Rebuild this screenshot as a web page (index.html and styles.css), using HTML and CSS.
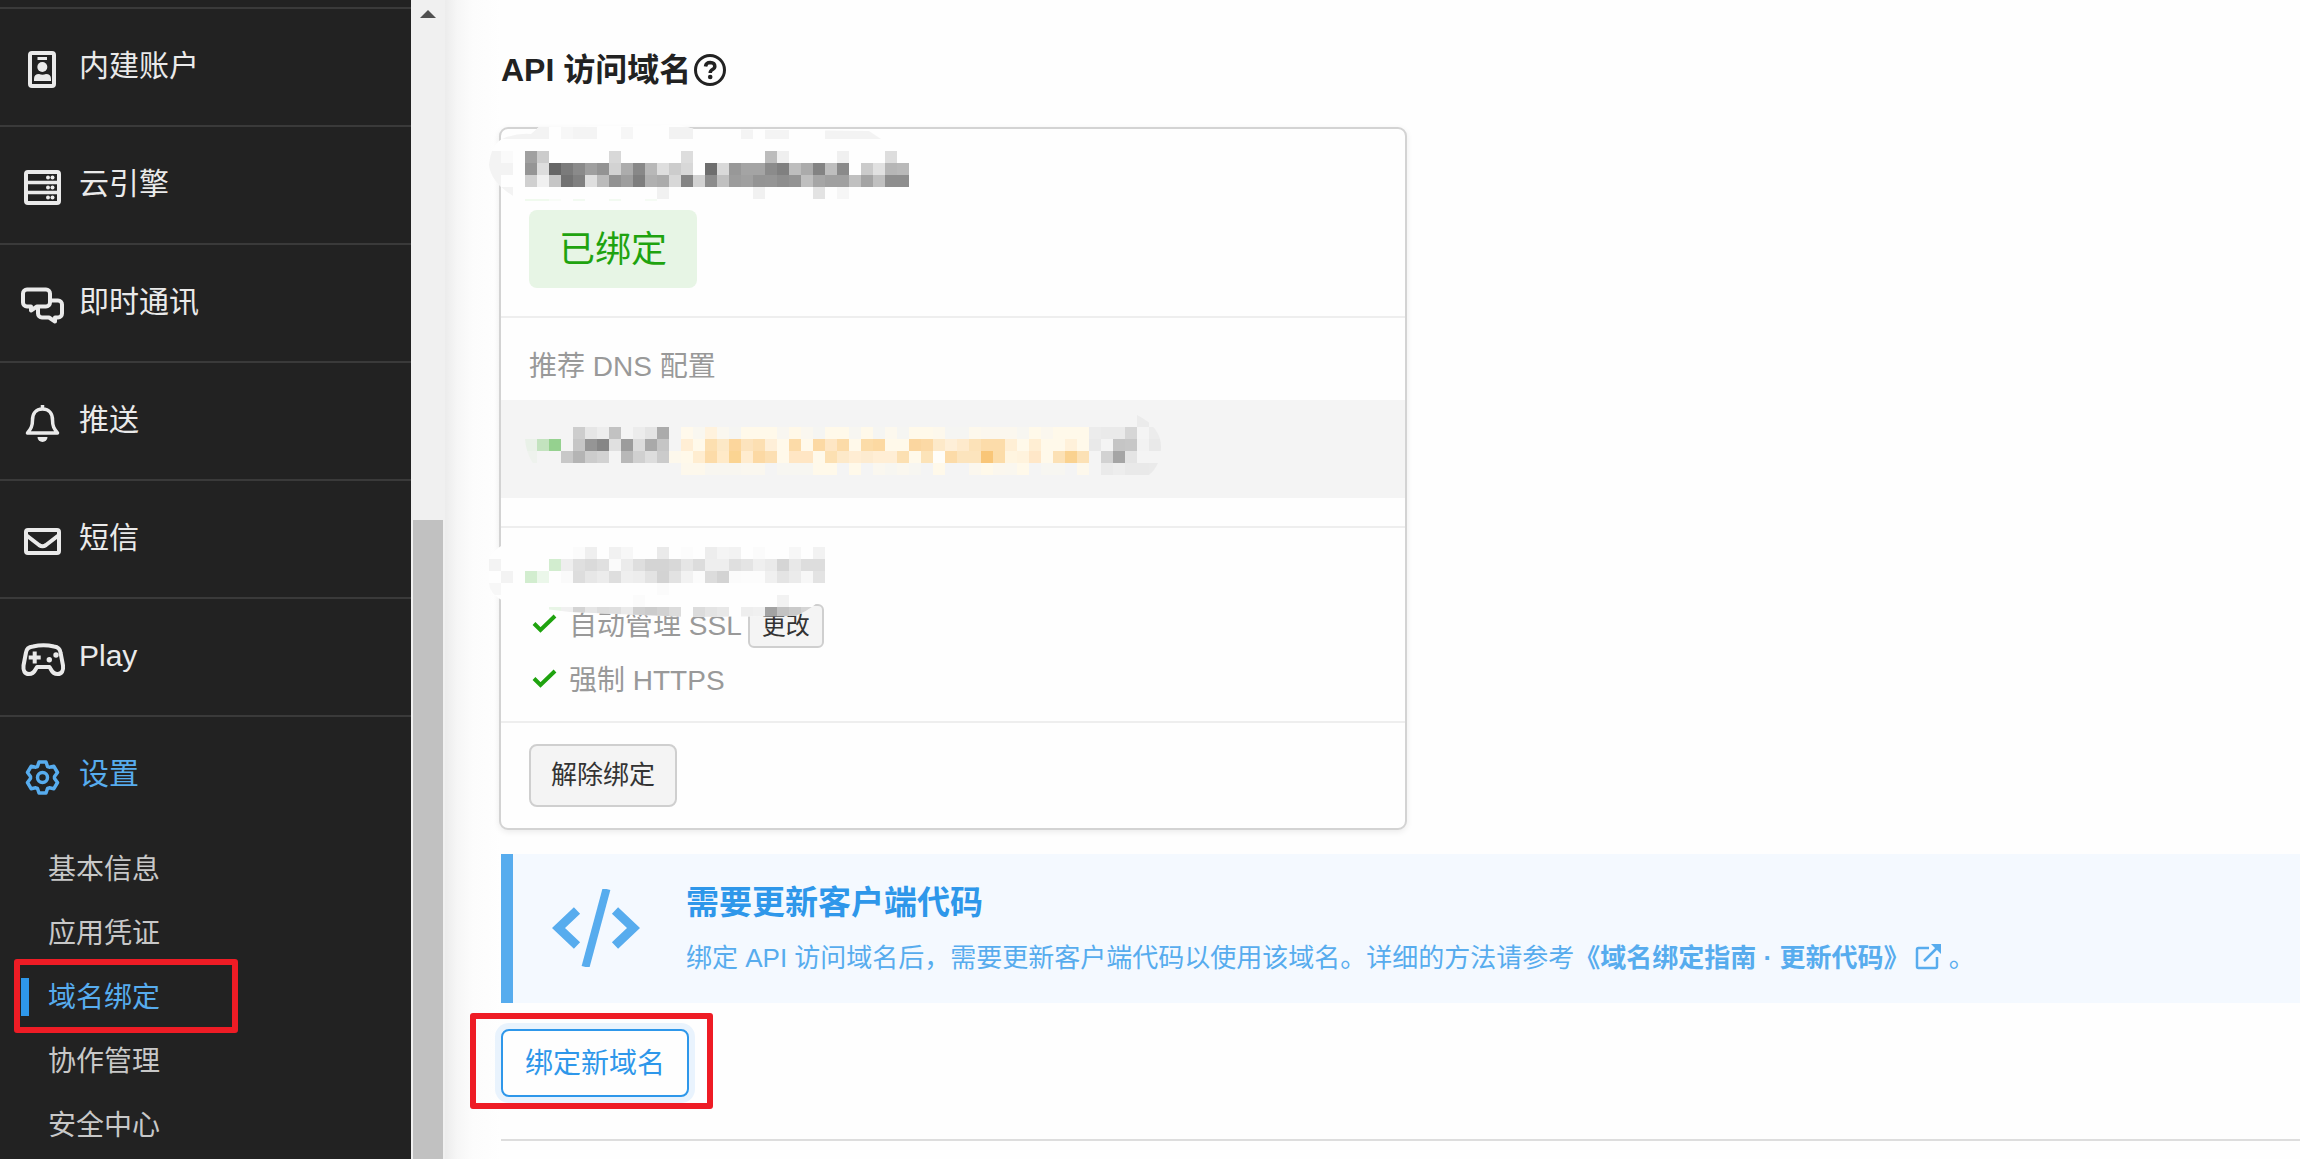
FILE: index.html
```html
<!DOCTYPE html>
<html lang="zh-CN">
  <head>
    <meta charset="UTF-8" />
    <meta name="viewport" content="width=device-width, initial-scale=1.0" />
    <title>域名绑定</title>
    <link rel="stylesheet" href="styles.css" />
  </head>

  <body>
    <div class="app">
      <nav class="sidebar">
        <a class="nav-item" href="#">
          <svg class="nav-icon" viewBox="0 0 48 40">
            <rect x="11" y="4" width="24" height="33" rx="2" />
            <path class="solid" d="M18.500 8h9.500v3h-9.500zM15 32v-2q0-5 5-5 3.500 1.500 7 0 5 0 5 5v2z" />
            <circle class="solid" cx="23.300" cy="18" r="5" />
          </svg>
          <span>内建账户</span>
        </a>
        <a class="nav-item" href="#">
          <svg class="nav-icon" viewBox="0 0 48 40">
            <rect x="7" y="5" width="33" height="31" rx="2" />
            <path d="M7 15.500h33M7 25.500h33" stroke-width="3.500" />
            <g class="solid">
              <circle cx="29" cy="10.500" r="2" /><circle cx="33.500" cy="10.500" r="2" />
              <circle cx="29" cy="20.500" r="2" /><circle cx="33.500" cy="20.500" r="2" />
              <circle cx="29" cy="30.500" r="2" /><circle cx="33.500" cy="30.500" r="2" />
            </g>
          </svg>
          <span>云引擎</span>
        </a>
        <a class="nav-item" href="#">
          <svg class="nav-icon" viewBox="0 0 48 40">
            <path d="M8 4.500h19a4 4 0 0 1 4 4v9a4 4 0 0 1-4 4h-9l-6 4v-4H8a4 4 0 0 1-4-4v-9a4 4 0 0 1 4-4z" />
            <path d="M32 15.500h7a4 4 0 0 1 4 4v9a4 4 0 0 1-4 4h-3v4l-6-4h-7a4 4 0 0 1-4-4v-7" />
          </svg>
          <span>即时通讯</span>
        </a>
        <a class="nav-item" href="#">
          <svg class="nav-icon" viewBox="0 0 48 40">
            <path d="M23.500 2v4M23.500 6c-7 0-10 5-10 11 0 7-2 9-5 13h30c-3-4-5-6-5-13 0-6-3-11-10-11z" stroke-width="3.500" />
            <path class="solid" d="M18.500 34h10a5 5 0 0 1-10 0z" />
          </svg>
          <span>推送</span>
        </a>
        <a class="nav-item" href="#">
          <svg class="nav-icon" viewBox="0 0 48 40">
            <rect x="7" y="9" width="33" height="23" rx="2" />
            <path d="M7 14l13 10q3.500 2.500 7 0l13-10" />
          </svg>
          <span>短信</span>
        </a>
        <a class="nav-item" href="#">
          <svg class="nav-icon" viewBox="0 0 48 40">
            <path d="M14 7.500q10.500-2.500 21 0c4 .5 6 2 6.500 6l2.500 13c.6 5-1 8.500-5.500 8.500-3 0-5-1.500-6.500-4.500L30.500 28H18l-1.500 2.500C15 33.500 13 35 10 35c-4.500 0-6-3.500-5.500-8.500l2.500-13c.5-4 2.500-5.500 7-6z" />
            <path d="M15.700 12.500v12M9.700 18.500h12" />
            <circle class="solid" cx="30.300" cy="20.700" r="2.700" />
            <circle class="solid" cx="37" cy="16" r="2.700" />
          </svg>
          <span>Play</span>
        </a>
        <a class="nav-item active" href="#">
          <svg class="nav-icon" viewBox="-23.500 -20.500 48 40">
            <path d="M-3.500-15.500H3.500L5-11 6.800-10.300 11.400-11.200 15-5 12-1V1L15 5 11.400 11.200 6.800 10.300 5 11 3.500 15.500H-3.500L-5 11-6.800 10.300-11.400 11.200-15 5-12 1V-1L-15-5-11.400-11.200-6.800-10.300-5-11z" stroke-width="3.500" />
            <circle r="5" stroke-width="3.500" />
          </svg>
          <span>设置</span>
        </a>
        <ul class="sub-nav">
          <li><a href="#">基本信息</a></li>
          <li><a href="#">应用凭证</a></li>
          <li class="current"><a href="#">域名绑定</a></li>
          <li><a href="#">协作管理</a></li>
          <li><a href="#">安全中心</a></li>
        </ul>
      </nav>

      <div class="scrollbar" aria-hidden="true">
        <div class="track">
          <svg width="16" height="8" viewBox="0 0 16 8"><path d="M0 8L8 0l8 8z" /></svg>
        </div>
        <div class="thumb"></div>
      </div>

      <main class="content">
        <h2 class="title">
          API 访问域名<svg class="help" viewBox="0 0 32 32">
            <circle cx="16" cy="16" r="14.500" />
            <path d="M11.500 12.500q.5-4 4.700-4 4.600.2 4.600 3.800 0 2-2.300 3.300-2.300 1.300-2.300 3.400" stroke-width="3.500" />
            <circle class="solid" cx="16.200" cy="23" r="2.300" />
          </svg>
        </h2>

        <section class="card">
          <div class="card-row">
            <div class="domain">
              <svg class="mosaic" width="440" height="76" data-mosaic="domain" aria-hidden="true">
                <clipPath id="clip-domain">
                  <path d="M0 38Q2 18 13 12 26 6 42 7L50 0 190-2 205 2 380 4 392 12H440V72L190 74H26V70Q2 56 0 38z" />
                </clipPath>
                <g clip-path="url(#clip-domain)"><rect class="veil" y="-2" width="440" height="78" /></g>
              </svg>
            </div>
            <span class="badge">已绑定</span>
          </div>

          <div class="card-row dns">
            <p class="label">推荐 DNS 配置</p>
            <div class="record">
              <svg class="mosaic" width="636" height="60" data-mosaic="record" aria-hidden="true">
                <clipPath id="clip-record">
                  <path d="M0 24L40 0H612Q636 12 636 32 636 50 624 60H20Q2 48 0 24z" />
                </clipPath>
                <g clip-path="url(#clip-record)"></g>
              </svg>
            </div>
          </div>

          <div class="card-row checks">
            <div class="status">
              <svg class="mosaic" width="350" height="84" data-mosaic="status" aria-hidden="true">
                <clipPath id="clip-status">
                  <path d="M0 26Q6 12 24 10L60 2H340L345 50Q330 74 306 83L200 84 81 79 56 76 14 68Q0 60 0 50z" />
                </clipPath>
                <g clip-path="url(#clip-status)"><rect class="veil" width="350" height="84" /></g>
              </svg>
            </div>
            <div class="check">
              <svg class="tick" viewBox="0 0 25 19"><path d="M2 9.500l6.500 6.500L23 2" /></svg>
              <span>自动管理 SSL</span>
              <button class="btn small" type="button">更改</button>
            </div>
            <div class="check">
              <svg class="tick" viewBox="0 0 25 19"><path d="M2 9.500l6.500 6.500L23 2" /></svg>
              <span>强制 HTTPS</span>
            </div>
          </div>

          <div class="card-row actions">
            <button class="btn" type="button">解除绑定</button>
          </div>
        </section>

        <aside class="callout">
          <svg class="code-icon" viewBox="0 0 88 78">
            <path d="M25 21.500L6.500 39l18.500 17.500M63 21.500L81.500 39 63 56.500" stroke-width="9" />
            <path d="M54.500 0l-21 78" stroke-width="8" />
          </svg>
          <div class="callout-body">
            <h3>需要更新客户端代码</h3>
            <p>
              绑定 API 访问域名后，需要更新客户端代码以使用该域名。详细的方法请参考<a href="#">《域名绑定指南 · 更新代码》<svg class="external" viewBox="0 0 26 26">
                <path d="M14 4H3.500Q2 4 2 5.500v17Q2 24 3.500 24h17q1.500 0 1.500-1.500V13" />
                <path d="M9 17L23 3" />
                <path class="solid" d="M16 0h10v10z" />
              </svg></a> 。
            </p>
          </div>
        </aside>

        <div class="bind">
          <button class="btn primary" type="button">绑定新域名</button>
        </div>

        <hr class="divider" />
      </main>
    </div>

    <script src="mosaic.js"></script>
  </body>
</html>
```
FILE: styles.css
```css
*,
*::before,
*::after {
  box-sizing: border-box;
}

body {
  margin: 0;
  overflow: hidden;
  background-color: #fefefe;
  color: #222;
  font-family: "Liberation Sans", "Noto Sans CJK SC", sans-serif;
  font-size: 28px;
}

h2,
h3,
p,
ul {
  margin: 0;
  padding: 0;
}

a {
  color: inherit;
  text-decoration: none;
}

button {
  font-family: inherit;
}

svg {
  flex-shrink: 0;
  fill: none;
  stroke: currentColor;
}

.solid {
  fill: currentColor;
  stroke: none;
}

.app {
  display: flex;
  height: 100vh;
}

/* Sidebar */
.sidebar {
  flex: 0 0 411px;
  padding-top: 7px;
  overflow: hidden;
  background-color: #222;
  color: #eaeaea;
}

.nav-item {
  display: flex;
  align-items: center;
  gap: 12px;
  height: 118px;
  padding: 4px 19px 0;
  border-top: 2px solid #3a3a3a;
  font-size: 30px;
}

.nav-item span {
  line-height: 44px;
  padding-bottom: 6px;
}

.nav-icon {
  width: 48px;
  height: 40px;
  stroke-width: 4;
  stroke-linejoin: round;
}

.active {
  color: #57acee;
}

.sub-nav {
  padding-top: 5px;
  list-style: none;
  color: #c8c8c8;
}

.sub-nav li {
  position: relative;
}

.sub-nav a {
  display: block;
  padding-left: 48px;
  line-height: 64px;
}

.sub-nav .current {
  color: #57acee;
}

.current::before {
  content: "";
  position: absolute;
  top: 12px;
  left: 21px;
  width: 8px;
  height: 38px;
  background-color: #2e97ea;
}

.current::after,
.bind::after {
  content: "";
  position: absolute;
  border: 6px solid #ee1c25;
  border-radius: 3px;
  pointer-events: none;
}

.current::after {
  top: -7px;
  left: 14px;
  width: 224px;
  height: 74px;
}

/* Scrollbar */
.scrollbar {
  display: grid;
  grid-template-rows: 520fr 639fr;
  flex: 0 0 34px;
  background-color: #f0f0f0;
}

.track {
  padding-top: 9px;
  line-height: 0;
  text-align: center;
}

.track svg {
  fill: #505050;
  stroke: none;
}

.thumb {
  margin: 0 2px;
  background-color: #c1c1c1;
}

/* Content */
.content {
  flex: 1;
  min-width: 0;
  padding: 46px 0 0 56px;
  background: linear-gradient(to right, #ececec, #f6f6f6 12px, #fcfcfc 28px, #fefefe 56px);
}

.title {
  display: flex;
  align-items: center;
  gap: 3px;
  margin-bottom: 33px;
  font-size: 32px;
  line-height: 48px;
}

.help {
  width: 32px;
  height: 32px;
  stroke-width: 3;
}

.card {
  max-width: 908px;
  margin-left: -2px;
  border: 2px solid #d3d3d3;
  border-radius: 9px;
  background-color: #fefefe;
  box-shadow: 0 2px 6px rgba(0, 0, 0, 0.08);
}

.card-row {
  padding: 28px;
}

.card-row + .card-row {
  border-top: 2px solid #eee;
}

.domain {
  position: relative;
  height: 53px;
}

.mosaic {
  position: absolute;
  top: -30px;
  left: -40px;
  overflow: visible;
  stroke: none;
  shape-rendering: crispEdges;
}

.veil {
  fill: #fefefe;
}

.badge {
  display: block;
  width: fit-content;
  padding: 2px 30px 0;
  border-radius: 8px;
  background-color: #e7f5e5;
  color: #1fa30f;
  font-size: 36px;
  line-height: 76px;
}

.dns {
  padding-top: 29px;
  padding-right: 0;
  padding-left: 0;
}

.label {
  padding: 0 28px;
  margin-bottom: 13px;
  color: #999;
  line-height: 40px;
}

.record {
  position: relative;
  height: 98px;
  background-color: #f4f4f4;
}

.record .mosaic {
  top: 15px;
  left: 24px;
}

.checks {
  padding-bottom: 13px;
  color: #999;
}

.status {
  position: relative;
  height: 42px;
}

.status .mosaic {
  top: -23px;
}

.check {
  display: flex;
  align-items: center;
  height: 55px;
  padding-left: 3px;
}

.check span {
  padding-bottom: 5px;
}

.tick {
  width: 25px;
  height: 19px;
  margin-right: 12px;
  margin-bottom: 4px;
  color: #1fa30f;
  stroke-width: 4;
}

.actions {
  padding-top: 21px;
  padding-bottom: 21px;
}

/* Buttons */
.btn {
  display: block;
  padding: 0 20px;
  border: 2px solid #cfcfcf;
  border-radius: 8px;
  background-color: #f4f4f4;
  color: #333;
  font-size: 26px;
  line-height: 59px;
}

.small {
  margin-left: 6px;
  padding: 0 12px;
  border-radius: 6px;
  font-size: 24px;
  line-height: 40px;
}

.primary {
  padding: 1px 22px 0;
  border-color: #2e97ea;
  background-color: #fefefe;
  box-shadow: 0 0 0 6px #e9f3fd;
  color: #2e97ea;
  font-size: 28px;
  line-height: 63px;
}

.bind {
  position: relative;
  width: fit-content;
  margin-top: 26px;
}

.bind::after {
  top: -16px;
  right: -24px;
  bottom: -12px;
  left: -31px;
}

/* Callout */
.callout {
  display: flex;
  align-items: flex-start;
  gap: 46px;
  margin-top: 24px;
  padding: 27px 39px 22px;
  border-left: 12px solid #57acee;
  background-color: #f4f9ff;
  color: #57acee;
}

.code-icon {
  width: 88px;
  height: 78px;
  margin-top: 8px;
}

.callout h3 {
  margin-bottom: 10px;
  color: #2e97ea;
  font-size: 33px;
  line-height: 44px;
}

.callout p {
  font-size: 26px;
  line-height: 46px;
}

.callout a {
  font-weight: bold;
}

.external {
  width: 26px;
  height: 26px;
  margin-left: 6px;
  stroke-width: 2.5;
  vertical-align: -3px;
}

.divider {
  margin: 42px 0 0;
  border: 0;
  border-top: 2px solid #ddd;
}
```
FILE: mosaic.js
```javascript
// Hidden values: 12px cells, two digits = grey, six digits = colour, "." = empty
const SIZE = 12;

const mosaics = {
  domain: [
    ". f3 f3 f3 f3 . f7 f4 f4 . . f6 . . . f2 f2 . . . . f4 . f4 f4 . . . f3 f3 f3 f3 f3",
    "",
    "f3 fa . a0 cc . . . . . d8 . . . . . dd . . . . . . bc ef . . . . f0 . . . dd",
    "f3 f3 . 95 dd 66 7b 8a 9f 93 d2 ac 88 b8 de cc d8 . 6e d9 98 a4 a4 8b 80 bd ab 83 be 8a . cb e1 b6 b9",
    "f3 . . d0 f0 c6 72 80 df bb 92 9e 7e b0 ab d8 84 d2 8c c0 9c a0 94 95 8e 93 bf a6 a0 a0 c0 a4 c0 8e 8e",
    ". f3 . . . . . . . . . . . . f1 . . . . . . . f1 . . . . e3 . f6",
    ". . . f0faee f0faee f8fcf7 . f2faf1 . . f2faf1 . . f5fbf4",
  ],
  record: [
    ". . . . . . . . . . . . . . . . . . . . . . . . . . . . . . . . . . . . . . . . . . . . . . . . . . . eb",
    ". . . . cd e6 ed c2 . ec e4 ab . fff9ec f9f7f0 fff2dd faf7ef f5f5f2 fff9ea fff9ea fff9ea f8f6f0 fff8e8 faf7ef f5f5f2 fff9ea fff9ea f7f6f1 fff9ea f5f5f2 fcf8ee f5f5f2 fff9ea fff9ea fdf8ec f5f5f2 f5f5f2 fdf8ec fbf7ee fbf7ee fbf7ee f7f6f1 fff9ea fbf7ee fff9ea fff9ea fff9ea ec ea ea d6 . ec",
    "e9f1e8 c3e3bf 95d18f . c6 95 86 e0 9c dc a9 c5 . ffeed5 fff9ea fcdfb0 fce8c6 fcd69c fce3bd fcdfb2 feefd8 fff9ea fcdba8 fff9ea fcd9a4 fee6c4 fcdba8 fff9ea fcdca8 fcd9a2 fff9ea fff9ea fbd69f fcd9a5 fde9c9 feefd8 feeacc fce2b8 fcdcaa fcdcaa ffefd5 fff9ea ffeed3 fff9ea fff9ea fff1da fff9ea e9 . c5 c7 f2 e9",
    "eef2ed . . c8 b4 cc d2 . b8 d0 dd cb fdf8ec fff9ea ffedd0 fcdba8 ffeac8 fbd492 ffeccf fcd9a4 fcdfb2 fff9ea ffe6c4 ffe6c4 fff9ea fce0b2 fde9c9 ffedd3 fdebd0 ffeed5 ffeed5 fce0b2 fff9ea fce3b8 fffdf8 fcdba8 fce4bd fce4bd f9c678 fcdca8 fff5e0 fff3dd ffe7c8 fff9ea fce1b5 fad290 fce1b5 . d2 a5 e4",
    ". . . . . . . . . . . . . fdf8ec fdf8ec f8f6f0 f8f6f0 f8f6f0 faf7ef faf7ef . f7f6f1 f7f6f1 f7f6f1 fff9ea fff9ea . fff9ea . faf7ef f7f6f1 faf7ef f7f6f1 . fff9ea . . fbf7ee fff9ea fbf7ee faf7ef fff9ea . f7f6f1 f7f6f1 . fdf8ec . ea ed e9 e9 ea",
  ],
  status: [
    "",
    ". . . . . . . fb ef . f1 f7 . . ea . fc . ed f4 f2 . fb . . f7 . f2",
    "f3 . . . . d2edcf ee df da e0 fa eb de d4 d4 d8 e6 dc ee ee df e4 ef ea d5 e8 dd dd",
    ". f3 . d2edcf ebf7ea . fa dd e7 ec de ef ed e3 d3 e2 f2 fb dc d3 fb fc fc f0 e4 eb f7 e3",
    "f7 . . . . . . . . . . . . . fb",
    ". . . . . . . . . . . . fb . . . . . . . . . . . f2",
    ". . . . . e8f5e6 f0 d4 e6 dd df ea d0 cc d2 dc . dc e4 e8 . ee f0 a3 c2 ca d5",
  ],
};

// first row offset inside each svg
const offsets = { domain: 0, record: 0, status: 2 };

document.querySelectorAll("[data-mosaic]").forEach((svg) => {
  const name = svg.dataset.mosaic;
  const group = svg.querySelector("g");

  mosaics[name].forEach((row, y) => {
    row.split(" ").forEach((cell, x) => {
      if (!cell || cell === ".") return;
      const rect = document.createElementNS("http://www.w3.org/2000/svg", "rect");
      rect.setAttribute("x", x * SIZE);
      rect.setAttribute("y", y * SIZE + offsets[name]);
      rect.setAttribute("width", SIZE);
      rect.setAttribute("height", SIZE);
      rect.setAttribute("fill", "#" + (cell.length === 2 ? cell.repeat(3) : cell));
      group.appendChild(rect);
    });
  });
});
```
